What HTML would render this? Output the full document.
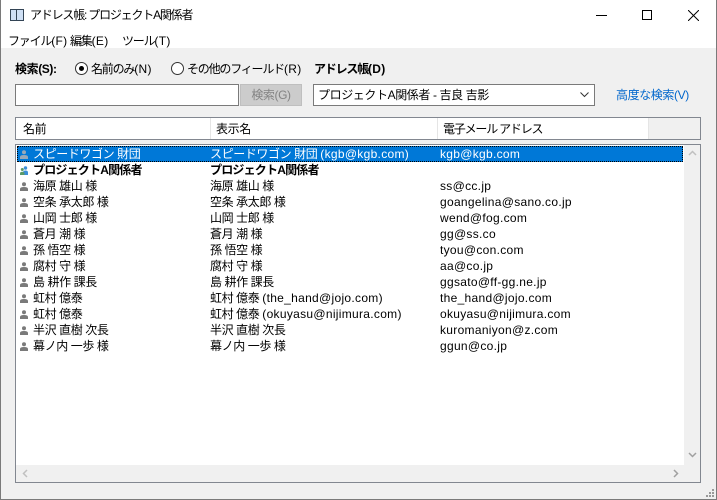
<!DOCTYPE html>
<html><head><meta charset="utf-8"><style>
*{margin:0;padding:0;box-sizing:border-box}
body{width:717px;height:500px;overflow:hidden;background:#f0f0f0;font-family:"Liberation Sans","Noto Sans CJK JP",sans-serif;font-size:12px;color:#000;position:relative;letter-spacing:-0.4px}
.a{position:absolute;white-space:nowrap}
.n{letter-spacing:-1.2px}
.l{letter-spacing:0.3px}
.win{position:absolute;left:0;top:0;width:717px;height:500px;border:1px solid #7a7a7a;border-top:none}
.row{position:absolute;left:17px;width:666px;height:16px;line-height:16px}
.row>span{position:absolute;top:0}
.row span.e{letter-spacing:0.3px}
.ic{position:absolute;left:3px;top:4px;width:8px;height:9px}
</style></head><body>
<div class="a" style="left:0;top:0;width:717px;height:48px;background:#fff"></div>
<div class="a" style="left:10px;top:9px;width:14px;height:12px;border:1px solid #345;background:#cfe0f5"></div>
<div class="a" style="left:16px;top:9px;width:1px;height:12px;background:#345"></div>
<div class="a n" style="left:30px;top:7px;font-size:12px;line-height:16px">アドレス帳: プロジェクトA関係者</div>
<div class="a" style="left:596px;top:15px;width:11px;height:1px;background:#000"></div>
<div class="a" style="left:642px;top:10px;width:10px;height:10px;border:1px solid #000"></div>
<svg class="a" style="left:688px;top:10px" width="11" height="11"><path d="M0 0L11 11M11 0L0 11" stroke="#000" stroke-width="1"/></svg>
<div class="a n" style="left:8px;top:34px;line-height:14px">ファイル<span class="l">(F)</span></div>
<div class="a n" style="left:70px;top:34px;line-height:14px">編集<span class="l">(E)</span></div>
<div class="a n" style="left:122px;top:34px;line-height:14px">ツール<span class="l">(T)</span></div>

<div class="a" style="left:15px;top:61px;font-weight:bold;line-height:16px">検索(S):</div>
<div class="a" style="left:75px;top:62px;width:13px;height:13px;border:1px solid #333;border-radius:50%;background:#fff"></div>
<div class="a" style="left:79px;top:66px;width:5px;height:5px;border-radius:50%;background:#000"></div>
<div class="a n" style="left:91px;top:61px;line-height:16px">名前のみ<span class="l">(N)</span></div>
<div class="a" style="left:171px;top:62px;width:13px;height:13px;border:1px solid #333;border-radius:50%;background:#fff"></div>
<div class="a n" style="left:187px;top:61px;line-height:16px">その他のフィールド<span class="l">(R)</span></div>
<div class="a n" style="left:314px;top:61px;font-weight:bold;line-height:16px">アドレス帳<span class="l">(D)</span></div>

<div class="a" style="left:15px;top:84px;width:224px;height:22px;border:1px solid #7a7a7a;background:#fff"></div>
<div class="a" style="left:240px;top:84px;width:62px;height:22px;border:1px solid #bfbfbf;background:#ccc;color:#838383;text-align:center;line-height:20px">検索(G)</div>
<div class="a" style="left:313px;top:84px;width:282px;height:22px;border:1px solid #7a7a7a;background:#fff;line-height:20px;padding-left:4px">プロジェクトA関係者 - 吉良 吉影</div>
<svg class="a" style="left:580px;top:92px" width="9" height="6"><path d="M0.5 0.5L4.5 4.5L8.5 0.5" stroke="#333" fill="none"/></svg>
<div class="a" style="left:616px;top:87px;color:#0066cc;line-height:16px">高度な検索(V)</div>

<div class="a" style="left:15px;top:117px;width:686px;height:23px;border:1px solid #828790;background:#fff"></div>
<div class="a" style="left:649px;top:118px;width:51px;height:21px;background:#f0f0f0"></div>
<div class="a" style="left:210px;top:118px;width:1px;height:21px;background:#e5e5e5"></div>
<div class="a" style="left:437px;top:118px;width:1px;height:21px;background:#e5e5e5"></div>
<div class="a" style="left:648px;top:118px;width:1px;height:21px;background:#e5e5e5"></div>
<div class="a" style="left:23px;top:121px;line-height:16px">名前</div>
<div class="a" style="left:216px;top:121px;line-height:16px">表示名</div>
<div class="a n" style="left:443px;top:121px;line-height:16px">電子メール アドレス</div>

<div class="a" style="left:15px;top:144px;width:686px;height:339px;border:1px solid #828790;background:#fff"></div>
<div class="a" style="left:684px;top:145px;width:16px;height:320px;background:#f0f0f0"></div>
<div class="a" style="left:16px;top:465px;width:668px;height:17px;background:#f0f0f0"></div>
<div class="a" style="left:684px;top:465px;width:16px;height:17px;background:#f0f0f0"></div>
<svg class="a" style="left:688px;top:150px" width="9" height="6"><path d="M1 5L4.5 1.5L8 5" stroke="#c0c0c0" stroke-width="1.5" fill="none"/></svg>
<svg class="a" style="left:688px;top:452px" width="9" height="6"><path d="M1 1L4.5 4.5L8 1" stroke="#a0a0a0" stroke-width="1.5" fill="none"/></svg>
<svg class="a" style="left:22px;top:469px" width="6" height="9"><path d="M5 1L1.5 4.5L5 8" stroke="#c0c0c0" stroke-width="1.5" fill="none"/></svg>
<svg class="a" style="left:673px;top:469px" width="6" height="9"><path d="M1 1L4.5 4.5L1 8" stroke="#a0a0a0" stroke-width="1.5" fill="none"/></svg>
<svg class="a" style="left:705px;top:488px" width="10" height="10"><g fill="#999"><rect x="7" y="1" width="2" height="2"/><rect x="4" y="4" width="2" height="2"/><rect x="7" y="4" width="2" height="2"/><rect x="1" y="7" width="2" height="2"/><rect x="4" y="7" width="2" height="2"/><rect x="7" y="7" width="2" height="2"/></g></svg>

<div class="row" style="top:146px;background:#0078d7;color:#fff;outline:1px dotted #000;outline-offset:-1px">
<svg class="ic" viewBox="0 0 8 9"><circle cx="4" cy="2.2" r="2" fill="#9aa9b8"/><path d="M0 9V7Q0 5 4 5Q8 5 8 7V9Z" fill="#9aa9b8"/></svg>
<span style="left:16px">スピードワゴン 財団</span><span style="left:193px">スピードワゴン 財団 <span class="l">(kgb@kgb.com)</span></span><span class="e" style="left:423px">kgb@kgb.com</span></div>
<div class="row" style="top:162px;font-weight:bold;letter-spacing:-0.8px">
<svg class="ic" viewBox="0 0 8 9" style="width:10px;left:2px"><circle cx="5.5" cy="2" r="1.7" fill="#3b8fd9"/><path d="M3 9V6.5Q3 4.5 5.5 4.5Q8 4.5 8 6.5V9Z" fill="#3b8fd9"/><circle cx="2.3" cy="3.5" r="1.5" fill="#5a9a6a"/><path d="M0 9V7.5Q0 5.8 2.3 5.8Q4.5 5.8 4.5 7.5V9Z" fill="#5a9a6a"/></svg>
<span style="left:16px">プロジェクトA関係者</span><span style="left:193px">プロジェクトA関係者</span></div>
<div id="rows"></div>
<script>
var d=[["海原 雄山 様","海原 雄山 様","ss@cc.jp"],["空条 承太郎 様","空条 承太郎 様","goangelina@sano.co.jp"],["山岡 士郎 様","山岡 士郎 様","wend@fog.com"],["蒼月 潮 様","蒼月 潮 様","gg@ss.co"],["孫 悟空 様","孫 悟空 様","tyou@con.com"],["腐村 守 様","腐村 守 様","aa@co.jp"],["島 耕作 課長","島 耕作 課長","ggsato@ff-gg.ne.jp"],["虹村 億泰","虹村 億泰 <span class=\"l\">(the_hand@jojo.com)</span>","the_hand@jojo.com"],["虹村 億泰","虹村 億泰 <span class=\"l\">(okuyasu@nijimura.com)</span>","okuyasu@nijimura.com"],["半沢 直樹 次長","半沢 直樹 次長"," kuromaniyon@z.com"],["幕ノ内 一歩 様","幕ノ内 一歩 様","ggun@co.jp"]];
var h="";d.forEach(function(r,i){h+='<div class="row" style="top:'+(178+i*16)+'px"><svg class="ic" viewBox="0 0 8 9"><circle cx="4" cy="2.2" r="2" fill="#7a7a7a"/><path d="M0 9V7Q0 5 4 5Q8 5 8 7V9Z" fill="#7a7a7a"/></svg><span style="left:16px">'+r[0]+'</span><span style="left:193px">'+r[1]+'</span><span class="e" style="left:423px">'+r[2]+'</span></div>';});
document.getElementById("rows").innerHTML=h;
</script>
<div class="win"></div>
</body></html>
